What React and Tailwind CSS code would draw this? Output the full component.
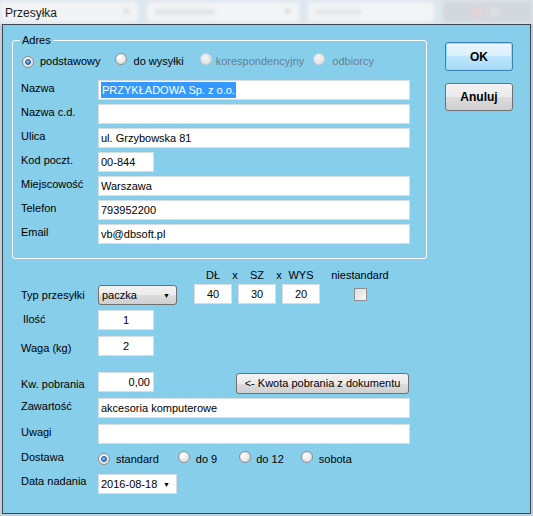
import React from 'react';

// Win7-style radio bullet
function Radio({ checked, disabled }) {
  if (disabled) {
    return (
      <span className="inline-block w-[12px] h-[12px] rounded-full border border-[#c9d2d8] bg-[radial-gradient(circle_at_40%_35%,#f4f4f4,#d9dcdf)]" />
    );
  }
  return (
    <span className="relative inline-flex items-center justify-center w-[12px] h-[12px] rounded-full border border-[#8e8f8f] bg-[radial-gradient(circle_at_40%_35%,#ffffff,#d4d4d4)]">
      {checked && (
        <span className="w-[6px] h-[6px] rounded-full bg-[radial-gradient(circle_at_40%_35%,#8ad0ff,#1a5fae)] border border-[#24509a]" />
      )}
    </span>
  );
}

function Field({ className = '', children, align = 'left' }) {
  const al = align === 'center' ? 'justify-center' : align === 'right' ? 'justify-end pr-[3px]' : 'pl-[2px]';
  return (
    <div className={`h-[20px] bg-white border border-[#d6dde3] flex items-center text-[11px] text-black ${al} ${className}`}>
      {children}
    </div>
  );
}

function Row({ label, children, labelClass = '' }) {
  return (
    <div className="flex items-center h-[20px]">
      <span className={`w-[77px] pb-[3px] text-[11px] text-black ${labelClass}`}>{label}</span>
      {children}
    </div>
  );
}

function Arrow() {
  return <span className="text-[7px] leading-none text-black">▼</span>;
}

function TitleBar() {
  return (
    <div className="relative h-[24px] bg-[#dde7ee] flex items-center overflow-hidden">
      <div className="flex items-center gap-[9px] h-[22px] w-full blur-[2px]">
        <div className="w-[138px] h-[20px] bg-[#f2f3f4] flex items-center justify-end pr-[8px]">
          <span className="text-[7px] text-[#aaa]">▼</span>
        </div>
        <div className="w-[152px] h-[20px] bg-[#f3f4f5] flex items-center justify-between px-[8px]">
          <span className="w-[60px] h-[4px] bg-[#d9dde0]" />
          <span className="text-[7px] text-[#aaa]">▼</span>
        </div>
        <div className="w-[126px] h-[20px] bg-[#f3f4f5] flex items-center px-[8px]">
          <span className="w-[45px] h-[4px] bg-[#dcdfe2]" />
        </div>
        <div className="flex-1 h-[22px] bg-[#d3d8dd] flex items-center gap-[10px] pl-[30px]">
          <span className="w-[8px] h-[8px] bg-[#ead2d5]" />
          <span className="w-[8px] h-[8px] bg-[#e0e3e5]" />
        </div>
      </div>
      <span className="absolute left-[5px] top-[4px] text-[12px] text-[#1b1b1b]">Przesyłka</span>
    </div>
  );
}

export default function App() {
  return (
    <div className="w-[533px] h-[516px] bg-[#c4ced8] font-['Liberation_Sans',Arial,sans-serif] overflow-hidden">
      <TitleBar />
      <div className="mx-[2px] h-[490px] border border-[#3d4652] bg-[#87ceeb] flex">
        {/* left column */}
        <div className="w-[430px] flex flex-col">
          <fieldset className="ml-[9px] mt-[9px] w-[415px] h-[225px] border border-white rounded-[3px] px-[8px]">
            <legend className="ml-[-1px] px-[2px] text-[11px] leading-[13px] text-black">Adres</legend>
            <div className="flex items-center h-[14px] mt-[7px] text-[11px]">
              <span className="ml-[1px]"><Radio checked /></span>
              <span className="ml-[6px] text-black">podstawowy</span>
              <span className="ml-[14px]"><Radio /></span>
              <span className="ml-[7px] text-black">do wysyłki</span>
              <span className="ml-[16px]"><Radio disabled /></span>
              <span className="ml-[4px] text-[#6a7f8e]">korespondencyjny</span>
              <span className="ml-[9px]"><Radio disabled /></span>
              <span className="ml-[7px] text-[#6a7f8e]">odbiorcy</span>
            </div>
            <div className="flex flex-col gap-[4px] mt-[12px]">
              <Row label="Nazwa">
                <Field className="w-[312px]">
                  <span className="bg-[#3399ff] text-white px-[1px]">PRZYKŁADOWA Sp. z o.o.</span>
                </Field>
              </Row>
              <Row label="Nazwa c.d.">
                <Field className="w-[312px]" />
              </Row>
              <Row label="Ulica">
                <Field className="w-[312px]">ul. Grzybowska 81</Field>
              </Row>
              <Row label="Kod poczt.">
                <Field className="w-[56px]">00-844</Field>
              </Row>
              <Row label="Miejscowość">
                <Field className="w-[312px]">Warszawa</Field>
              </Row>
              <Row label="Telefon">
                <Field className="w-[312px]">793952200</Field>
              </Row>
              <Row label="Email">
                <Field className="w-[312px]">vb@dbsoft.pl</Field>
              </Row>
            </div>
          </fieldset>

          {/* lower form */}
          <div className="pl-[18px] flex flex-col">
            <div className="flex items-end mt-[10px]">
              <div className="flex items-center h-[20px]">
                <span className="w-[77px] pt-[2px] text-[11px] text-black">Typ przesyłki</span>
                <div className="w-[79px] h-[20px] mt-[2px] rounded-[3px] border border-[#707070] bg-[linear-gradient(#f2f2f2,#ebebeb_50%,#dddddd_50%,#cfcfcf)] flex items-center justify-between pl-[3px] pr-[6px] text-[11px] text-black">
                  <span>paczka</span>
                  <Arrow />
                </div>
              </div>
              <div className="flex ml-[17px] items-end">
                <div className="flex flex-col items-center w-[38px]">
                  <span className="text-[11px] leading-[13px] text-black">DŁ</span>
                  <Field className="w-[38px] mt-[2px]" align="center">40</Field>
                </div>
                <div className="w-[6px] self-start text-center text-[11px] leading-[13px] text-black">x</div>
                <div className="flex flex-col items-center w-[38px]">
                  <span className="text-[11px] leading-[13px] text-black">SZ</span>
                  <Field className="w-[38px] mt-[2px]" align="center">30</Field>
                </div>
                <div className="w-[6px] self-start text-center text-[11px] leading-[13px] text-black">x</div>
                <div className="flex flex-col items-center w-[38px]">
                  <span className="text-[11px] leading-[13px] text-black">WYS</span>
                  <Field className="w-[38px] mt-[2px]" align="center">20</Field>
                </div>
              </div>
              <div className="ml-[9px] w-[62px] flex flex-col items-center self-start">
                <span className="text-[11px] leading-[13px] text-black">niestandard</span>
                <span className="mt-[6px] w-[13px] h-[13px] border border-[#8f8f8f] bg-[linear-gradient(135deg,#dcdcdc,#f8f8f8)]" />
              </div>
            </div>

            <div className="flex items-center h-[20px] mt-[6px]">
              <span className="w-[77px] pl-[2px] pb-[2px] text-[11px] text-black">Ilość</span>
              <Field className="w-[56px]" align="center">1</Field>
            </div>
            <div className="flex items-center h-[20px] mt-[6px]">
              <span className="w-[77px] pt-[4px] text-[11px] text-black">Waga (kg)</span>
              <Field className="w-[56px]" align="center">2</Field>
            </div>
            <div className="flex items-center h-[20px] mt-[16px]">
              <span className="w-[77px] pt-[4px] text-[11px] text-black">Kw. pobrania</span>
              <Field className="w-[56px]" align="right">0,00</Field>
              <div className="ml-[82px] w-[173px] h-[21px] mt-[2px] rounded-[3px] border border-[#707070] bg-[linear-gradient(#f2f2f2,#ebebeb_50%,#dddddd_50%,#cfcfcf)] flex items-center justify-center text-[11px] text-black">
                &lt;- Kwota pobrania z dokumentu
              </div>
            </div>
            <div className="flex flex-col gap-[6px] mt-[6px]">
              <Row label="Zawartość">
                <Field className="w-[312px]">akcesoria komputerowe</Field>
              </Row>
              <Row label="Uwagi">
                <Field className="w-[312px]" />
              </Row>
            </div>
            <div className="flex items-center h-[14px] mt-[8px] text-[11px] text-black">
              <span className="w-[77px] pb-[4px]">Dostawa</span>
              <Radio checked />
              <span className="ml-[6px]">standard</span>
              <span className="ml-[19px]"><Radio /></span>
              <span className="ml-[6px]">do 9</span>
              <span className="ml-[22px]"><Radio /></span>
              <span className="ml-[5px]">do 12</span>
              <span className="ml-[17px]"><Radio /></span>
              <span className="ml-[6px]">sobota</span>
            </div>
            <div className="flex items-center h-[20px] mt-[8px]">
              <span className="w-[77px] pb-[6px] text-[11px] text-black">Data nadania</span>
              <div className="w-[79px] h-[20px] bg-white border border-[#d6dde3] flex items-center justify-between pl-[2px] pr-[6px] text-[11px] text-black">
                <span>2016-08-18</span>
                <Arrow />
              </div>
            </div>
          </div>
        </div>

        {/* right column: buttons */}
        <div className="flex flex-col pl-[12px] pt-[17px]">
          <div className="w-[68px] h-[29px] rounded-[3px] border border-[#3c7fb1] shadow-[inset_0_0_0_1px_#8ee0fb] bg-[linear-gradient(#eaf6fd,#d9f0fc_50%,#bee6fd_50%,#a7d9f5)] flex items-center justify-center text-[12px] font-bold text-black">
            OK
          </div>
          <div className="mt-[12px] w-[68px] h-[28px] rounded-[3px] border border-[#707070] bg-[linear-gradient(#f2f2f2,#ebebeb_50%,#dddddd_50%,#cfcfcf)] flex items-center justify-center text-[12px] font-bold text-black">
            Anuluj
          </div>
        </div>
      </div>
    </div>
  );
}
